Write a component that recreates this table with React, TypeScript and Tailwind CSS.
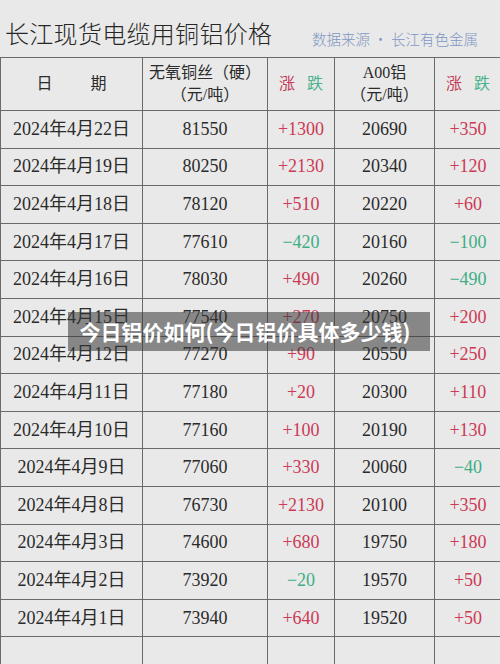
import React from "react";

type Row = { date: string; cu: string; cuChg: string; al: string; alChg: string };

const rows: Row[] = [
  { date: "2024年4月22日", cu: "81550", cuChg: "+1300", al: "20690", alChg: "+350" },
  { date: "2024年4月19日", cu: "80250", cuChg: "+2130", al: "20340", alChg: "+120" },
  { date: "2024年4月18日", cu: "78120", cuChg: "+510", al: "20220", alChg: "+60" },
  { date: "2024年4月17日", cu: "77610", cuChg: "−420", al: "20160", alChg: "−100" },
  { date: "2024年4月16日", cu: "78030", cuChg: "+490", al: "20260", alChg: "−490" },
  { date: "2024年4月15日", cu: "77540", cuChg: "+270", al: "20750", alChg: "+200" },
  { date: "2024年4月12日", cu: "77270", cuChg: "+90", al: "20550", alChg: "+250" },
  { date: "2024年4月11日", cu: "77180", cuChg: "+20", al: "20300", alChg: "+110" },
  { date: "2024年4月10日", cu: "77160", cuChg: "+100", al: "20190", alChg: "+130" },
  { date: "2024年4月9日", cu: "77060", cuChg: "+330", al: "20060", alChg: "−40" },
  { date: "2024年4月8日", cu: "76730", cuChg: "+2130", al: "20100", alChg: "+350" },
  { date: "2024年4月3日", cu: "74600", cuChg: "+680", al: "19750", alChg: "+180" },
  { date: "2024年4月2日", cu: "73920", cuChg: "−20", al: "19570", alChg: "+50" },
  { date: "2024年4月1日", cu: "73940", cuChg: "+640", al: "19520", alChg: "+50" },
];

const serif = { fontFamily: '"Liberation Serif", "Noto Sans CJK SC", serif' };

function Change({ v }: { v: string }) {
  const up = v.startsWith("+");
  return <span className={up ? "text-[#cc3a55]" : "text-[#3fae86]"}>{v}</span>;
}

export default function App() {
  const cell = "border border-[#6a6a6a] text-center p-0";
  return (
    <div
      className="relative w-[500px] h-[664px] overflow-hidden bg-[#e9e9e9] text-[#2b2b2b]"
      style={serif}
    >
      {/* title */}
      <div className="flex items-end h-[57px] pb-[12px]">
        <h1
          className="pl-[5px] text-[24px] leading-none text-[#262626] tracking-[0.3px]"
          style={{ fontFamily: '"Noto Sans CJK SC", sans-serif', fontWeight: 300 }}
        >
          长江现货电缆用铜铝价格
        </h1>
        <span
          className="ml-auto mr-[22px] mb-[-1px] text-[14.5px] leading-none text-[#7f97c4]"
          style={{ fontFamily: '"Noto Sans CJK SC", sans-serif', fontWeight: 300 }}
        >
          数据来源 · 长江有色金属
        </span>
      </div>

      <table className="border-collapse table-fixed w-[501px] text-[18px]">
        <colgroup>
          <col className="w-[142px]" />
          <col className="w-[125px]" />
          <col className="w-[67px]" />
          <col className="w-[100px]" />
          <col className="w-[67px]" />
        </colgroup>
        <thead>
          <tr className="h-[53px] text-[16px] leading-[22px]">
            <th className={cell + " font-normal"}>
              <span>日</span>
              <span className="inline-block w-[38px]" />
              <span>期</span>
            </th>
            <th className={cell + " font-normal"}>
              <div>无氧铜丝（硬）</div>
              <div>（元/吨）</div>
            </th>
            <th className={cell + " font-normal"}>
              <span className="text-[#c23a58]">涨</span>
              <span className="inline-block w-[12px]" />
              <span className="text-[#48b28c]">跌</span>
            </th>
            <th className={cell + " font-normal"}>
              <div>A00铝</div>
              <div>（元/吨）</div>
            </th>
            <th className={cell + " font-normal"}>
              <span className="text-[#c23a58]">涨</span>
              <span className="inline-block w-[12px]" />
              <span className="text-[#48b28c]">跌</span>
            </th>
          </tr>
        </thead>
        <tbody>
          {rows.map((r) => (
            <tr key={r.date} className="h-[37.6px]">
              <td className={cell}>{r.date}</td>
              <td className={cell}>{r.cu}</td>
              <td className={cell}>
                <Change v={r.cuChg} />
              </td>
              <td className={cell}>{r.al}</td>
              <td className={cell}>
                <Change v={r.alChg} />
              </td>
            </tr>
          ))}
          <tr className="h-[40px]">
            <td className={cell}></td>
            <td className={cell}></td>
            <td className={cell}></td>
            <td className={cell}></td>
            <td className={cell}></td>
          </tr>
        </tbody>
      </table>

      {/* caption overlay */}
      <div className="absolute left-[68px] top-[312px] w-[362px] h-[39px] bg-[rgba(55,55,55,0.55)] flex items-center justify-center">
        <span
          className="text-white text-[21px] font-bold leading-none -ml-[8px]"
          style={{ fontFamily: '"Noto Sans CJK SC", sans-serif' }}
        >
          今日铝价如何(今日铝价具体多少钱)
        </span>
      </div>
    </div>
  );
}
